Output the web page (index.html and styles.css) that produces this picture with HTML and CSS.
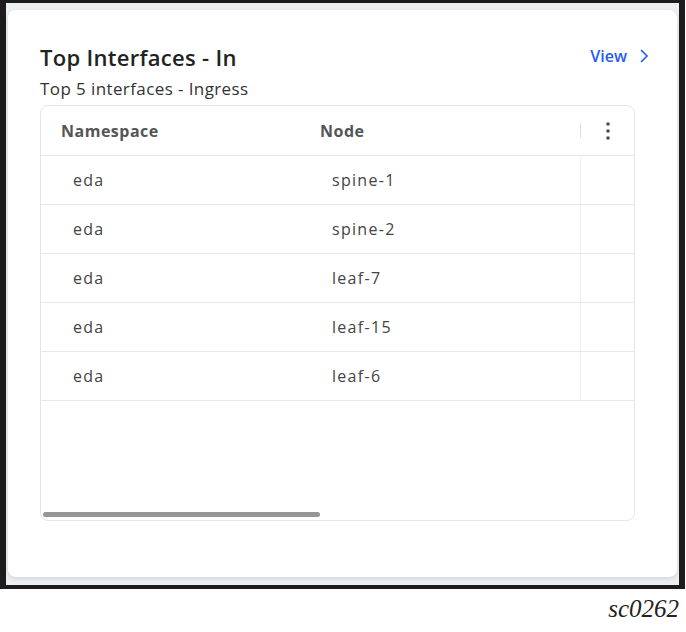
FILE: index.html
```html
<!DOCTYPE html>
<html lang="en">
<head>
    <meta charset="UTF-8">
    <meta name="viewport" content="width=device-width, initial-scale=1.0">
    <title>Top Interfaces - In</title>
    <link rel="stylesheet" href="styles.css">
</head>
<body>
    <div class="frame">
        <div class="card">
            <div class="card-head">
                <div>
                    <h2 class="title">Top Interfaces - In</h2>
                    <p class="subtitle">Top 5 interfaces - Ingress</p>
                </div>
                <a class="view-link" href="#">View
                    <svg width="10" height="16" viewBox="0 0 10 16"><path d="M2 2 L8 8 L2 14" fill="none" stroke="currentColor" stroke-width="1.6"/></svg>
                </a>
            </div>
            <div class="grid">
                <div class="grid-row grid-header">
                    <div class="cell col-ns">Namespace</div>
                    <div class="cell col-node">Node</div>
                    <div class="cell col-menu">
                        <span class="sep"></span>
                        <svg class="kebab" width="4" height="18" viewBox="0 0 4 18"><rect x="0.5" y="0.5" width="3" height="3"/><rect x="0.5" y="7.5" width="3" height="3"/><rect x="0.5" y="14.5" width="3" height="3"/></svg>
                    </div>
                </div>
                <div class="grid-row">
                    <div class="cell col-ns">eda</div>
                    <div class="cell col-node">spine-1</div>
                    <div class="cell col-menu"></div>
                </div>
                <div class="grid-row">
                    <div class="cell col-ns">eda</div>
                    <div class="cell col-node">spine-2</div>
                    <div class="cell col-menu"></div>
                </div>
                <div class="grid-row">
                    <div class="cell col-ns">eda</div>
                    <div class="cell col-node">leaf-7</div>
                    <div class="cell col-menu"></div>
                </div>
                <div class="grid-row">
                    <div class="cell col-ns">eda</div>
                    <div class="cell col-node">leaf-15</div>
                    <div class="cell col-menu"></div>
                </div>
                <div class="grid-row">
                    <div class="cell col-ns">eda</div>
                    <div class="cell col-node">leaf-6</div>
                    <div class="cell col-menu"></div>
                </div>
                <div class="grid-fill"></div>
                <div class="hscroll"><div class="thumb"></div></div>
            </div>
        </div>
    </div>
    <p class="caption">sc0262</p>
</body>
</html>
```
FILE: styles.css
```css
body {
    margin: 0;
    padding: 0;
    background: #fff;
    font-family: "Open Sans", "Noto Sans", sans-serif;
    color: #333;
}

.frame {
    box-sizing: border-box;
    width: 685px;
    height: 589px;
    border-style: solid;
    border-color: #1d1b1b;
    border-width: 3px 6px 4px 6px;
    padding: 7px 2px 8px 2px;
    background: #eceef2;
    display: flex;
}

.card {
    flex: 1;
    background: #fff;
    border-radius: 8px;
    box-shadow: 0 2px 4px rgba(40, 50, 70, 0.12);
    padding: 32px 28px 56px 32px;
    display: flex;
    flex-direction: column;
}

.card-head {
    display: flex;
    justify-content: space-between;
    align-items: flex-start;
}

.title {
    margin: 0;
    font-size: 22px;
    line-height: 30px;
    font-weight: 600;
    letter-spacing: 0.3px;
    color: #222;
}

.subtitle {
    margin: 6px 0 0;
    font-size: 17px;
    line-height: 22px;
    letter-spacing: 0.4px;
    color: #333;
}

.view-link {
    display: flex;
    align-items: center;
    gap: 12px;
    margin-top: 3px;
    color: #1f5cf5;
    font-size: 16px;
    font-weight: 600;
    text-decoration: none;
}

.grid {
    flex: 1;
    margin-top: 5px;
    margin-right: 14px;
    border: 1px solid #e3e5e9;
    border-radius: 8px;
    display: flex;
    flex-direction: column;
    overflow: hidden;
}

.grid-row {
    display: flex;
    height: 48px;
    border-bottom: 1px solid #e6e8eb;
    font-size: 16px;
    letter-spacing: 1.3px;
    color: #444;
}

.grid-header {
    height: 49px;
    font-weight: 700;
    letter-spacing: 0.5px;
    color: #555;
}

.cell {
    display: flex;
    align-items: center;
    padding-left: 32px;
    box-sizing: border-box;
}

.grid-header .cell {
    padding-left: 20px;
}

.col-ns {
    width: 259px;
}

.col-node {
    width: 280px;
}

.col-menu {
    flex: 1;
    padding-left: 0;
    border-left: 1px solid #eef0f2;
}

.grid-header .col-menu {
    border-left: none;
    padding-left: 0;
    gap: 25px;
}

.sep {
    width: 1px;
    height: 15px;
    background: #dcdfe3;
}

.kebab {
    fill: #444;
}

.grid-fill {
    flex: 1;
}

.hscroll {
    height: 5px;
    padding: 0 2px 3px;
}

.thumb {
    width: 277px;
    height: 5px;
    border-radius: 3px;
    background: #969696;
}

.caption {
    margin: 6px 7px 0 0;
    text-align: right;
    font-family: "Liberation Serif", serif;
    font-style: italic;
    font-size: 25px;
    color: #222;
}
```
